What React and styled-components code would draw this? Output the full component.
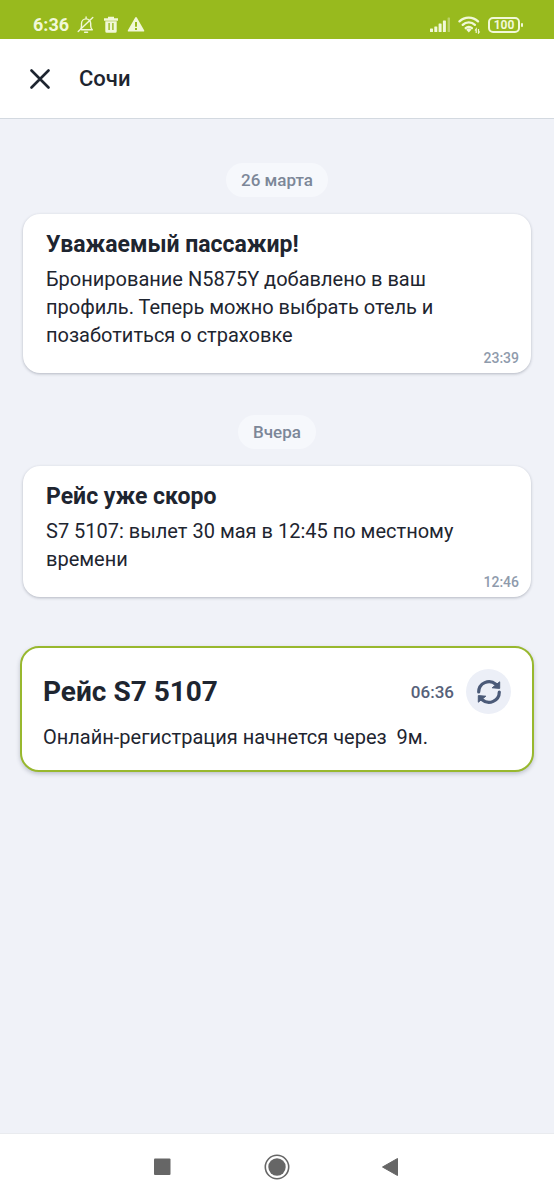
import styled, { createGlobalStyle } from "styled-components";

const messages = [
	{
		id: 1,
		date: "26 марта",
		title: "Уважаемый пассажир!",
		text: "Бронирование N5875Y добавлено в ваш профиль. Теперь можно выбрать отель и позаботиться о страховке",
		time: "23:39",
	},
	{
		id: 2,
		date: "Вчера",
		title: "Рейс уже скоро",
		text: "S7 5107: вылет 30 мая в 12:45 по местному времени",
		time: "12:46",
	},
];

const StatusBar = () => {
	return (
		<Status>
			<div className="group">
				<span className="clock">6:36</span>
				{/* muted bell */}
				<svg width="18" height="18" viewBox="0 0 18 18" fill="none">
					<path
						d="M3 13.8c1.200-1 1.500-2.200 1.500-4V7.500a4.600 4.600 0 0 1 9.200 0v2.300c0 1.800.4 3 1.600 4H4.500M7.600 16.200h3M9.100 1v1.800M1.200 15.600 15.800 1.600"
						stroke="currentColor"
						strokeWidth="1.400"
						strokeLinecap="round"
						strokeLinejoin="round"
					/>
				</svg>
				{/* trash can */}
				<svg width="16" height="18" viewBox="0 0 16 18">
					<path
						fill="currentColor"
						fillRule="evenodd"
						d="M5 .8h6v1.400h4v2.600H1V2.200h4zM2.300 5.300h11.400V15.200a1.500 1.500 0 0 1-1.500 1.500H3.800a1.500 1.500 0 0 1-1.500-1.500zM5.400 7v7h1.400V7zM9.200 7v7h1.400V7z"
					/>
				</svg>
				{/* warning */}
				<svg width="18" height="18" viewBox="0 0 18 18">
					<path
						fill="currentColor"
						fillRule="evenodd"
						d="M9 1a1 1 0 0 1 .8.4l7.300 12.900a.8.8 0 0 1-.7 1.300H1.600a.8.8 0 0 1-.7-1.300L8.200 1.400a1 1 0 0 1 .8-.4zM8 6v4.800h2V6zM8 12v2h2v-2z"
					/>
				</svg>
			</div>
			<div className="group right">
				<svg width="22" height="18" viewBox="0 0 22 18" fill="currentColor">
					<rect x="1" y="12.500" width="3" height="3.500" rx=".6" />
					<rect x="5.300" y="10.500" width="3" height="5.500" rx=".6" />
					<rect x="9.600" y="7.500" width="3" height="8.500" rx=".6" />
					<rect x="13.900" y="4.500" width="3" height="11.500" rx=".6" />
					<rect x="18.600" y="1.500" width="2.400" height="14.500" rx=".6" opacity=".4" />
				</svg>
				<svg width="23" height="18" viewBox="0 0 23 18" fill="none">
					<g stroke="currentColor" strokeWidth="2.300" strokeLinecap="round">
						<path d="M1.500 5.400a13 13 0 0 1 18.500 0" />
						<path d="M4.700 8.900a8.600 8.600 0 0 1 12.200 0" />
						<path d="M7.700 12.200a4.500 4.500 0 0 1 6.200 0" />
					</g>
					<path d="m8.200 13.700 2.600 2.800 2.600-2.800a3.600 3.600 0 0 0-5.200 0z" fill="currentColor" />
					<path
						d="M18.200 17v-4l-1.200 1.500M20.500 13v4l1.200-1.500"
						stroke="currentColor"
						strokeWidth="1.200"
					/>
				</svg>
				<Battery>
					<span>100</span>
				</Battery>
			</div>
		</Status>
	);
};

const Message = ({ title, text, time }) => {
	return (
		<Card>
			<h2>{title}</h2>
			<p>{text}</p>
			<time>{time}</time>
		</Card>
	);
};

const Flight = () => {
	return (
		<FlightCard>
			<div className="top">
				<h2>Рейс S7 5107</h2>
				<time>06:36</time>
				<RefreshButton type="button" aria-label="Обновить">
					<svg width="26" height="26" viewBox="0 0 26 26" fill="none">
						<g stroke="currentColor" strokeWidth="3.200" strokeLinecap="round">
							<path d="M2.700 13A10.300 10.300 0 0 1 19.800 5.300" />
							<path d="M23.300 13A10.300 10.300 0 0 1 6.200 20.700" />
						</g>
						<path
							d="M23.700 2.800v6.600l-7.500-.6zM2.300 23.200v-6.600l7.500.6z"
							fill="currentColor"
							stroke="currentColor"
							strokeLinejoin="round"
						/>
					</svg>
				</RefreshButton>
			</div>
			<p>Онлайн-регистрация начнется через&nbsp; 9м.</p>
		</FlightCard>
	);
};

const App = () => {
	return (
		<Page>
			<GlobalStyle />
			<StatusBar />
			<Header>
				<button type="button" aria-label="Закрыть">
					<svg width="20" height="20" viewBox="0 0 20 20" fill="none">
						<path
							d="M1.500 1.500l17 17M18.500 1.500l-17 17"
							stroke="currentColor"
							strokeWidth="2.600"
							strokeLinecap="round"
						/>
					</svg>
				</button>
				<h1>Сочи</h1>
			</Header>

			<Feed>
				{messages.map(({ id, date, ...message }) => (
					<section key={id}>
						<DateLabel>{date}</DateLabel>
						<Message {...message} />
					</section>
				))}
				<Flight />
			</Feed>

			<NavBar>
				<button type="button" aria-label="Недавние">
					<svg width="26" height="26" viewBox="0 0 26 26">
						<rect x="4" y="4.500" width="16.500" height="16.500" rx="1" fill="currentColor" />
					</svg>
				</button>
				<button type="button" aria-label="Домой">
					<svg width="26" height="26" viewBox="0 0 26 26">
						<circle cx="13" cy="13" r="11.700" fill="none" stroke="currentColor" strokeWidth="1.600" />
						<circle cx="13" cy="13" r="8.700" fill="currentColor" />
					</svg>
				</button>
				<button type="button" aria-label="Назад">
					<svg width="26" height="26" viewBox="0 0 26 26">
						<path
							d="M19.500 4.500v17L4.500 13z"
							fill="currentColor"
							stroke="currentColor"
							strokeLinejoin="round"
						/>
					</svg>
				</button>
			</NavBar>
		</Page>
	);
};

export default App;

const GlobalStyle = createGlobalStyle`
	*,
	*::before,
	*::after {
		box-sizing: border-box;
		margin: 0;
		padding: 0;
	}
	body {
		font-family: Roboto, "Noto Sans", sans-serif;
		color: #1e2530;
		background-color: #f0f2f8;
	}
	button {
		display: grid;
		place-items: center;
		border: 0;
		background: none;
		color: inherit;
		cursor: pointer;
	}
	svg {
		display: block;
	}
`;

const Page = styled.div`
	min-height: 100vh;
	display: flex;
	flex-direction: column;
`;

const Status = styled.div`
	display: flex;
	justify-content: space-between;
	padding: 10px 34px 0 33px;
	height: 39px;
	background-color: #98ba1e;
	color: #f1f8d8;

	.group {
		display: flex;
		align-items: center;
		gap: 8px;
	}
	.right {
		gap: 7px;
	}
	.clock {
		font-size: 18px;
		font-weight: 700;
	}
`;

const Battery = styled.div`
	position: relative;
	display: grid;
	place-items: center;
	width: 32px;
	height: 16px;
	border: 2px solid currentColor;
	border-radius: 5px;
	font-size: 12px;
	line-height: 12px;
	font-weight: 700;

	&::after {
		content: "";
		position: absolute;
		right: -5px;
		top: 4px;
		width: 2px;
		height: 4px;
		border-radius: 1px;
		background-color: currentColor;
	}
`;

const Header = styled.header`
	display: flex;
	align-items: center;
	gap: 24px;
	height: 80px;
	padding-inline: 24px;
	background-color: #fff;
	border-bottom: 1px solid #d3d9e0;

	button {
		width: 31px;
		height: 32px;
	}
	h1 {
		font-size: 22px;
		font-weight: 500;
		line-height: 30px;
	}
`;

const Feed = styled.main`
	flex: 1;
	padding: 2px 20px 40px;

	section {
		padding-inline: 3px;
	}
`;

const DateLabel = styled.h3`
	width: fit-content;
	margin: 42px auto 17px;
	padding-inline: 15px;
	border-radius: 17px;
	background-color: #f6f8fc;
	color: #7c8798;
	font-size: 17px;
	font-weight: 500;
	line-height: 34px;
`;

const Card = styled.article`
	padding: 17px 12px 6px 23px;
	border-radius: 17px;
	background-color: #fff;
	box-shadow: 0 1px 3px rgba(40, 50, 70, 0.3);

	h2 {
		font-size: 23px;
		font-weight: 700;
		line-height: 28px;
	}
	p {
		padding: 6px 23px 1px 0;
		font-size: 20px;
		line-height: 28px;
	}
	time {
		display: block;
		text-align: right;
		color: #8f9bac;
		font-size: 14px;
		font-weight: 500;
		line-height: 17px;
	}
`;

const FlightCard = styled.article`
	margin-top: 49px;
	padding: 21px 21px 19px;
	border: 2px solid #98b82e;
	border-radius: 19px;
	background-color: #fff;
	box-shadow: 0 2px 4px rgba(40, 50, 70, 0.25);

	.top {
		display: flex;
		align-items: center;
		gap: 12px;
	}
	h2 {
		flex: 1;
		font-size: 28px;
		font-weight: 700;
		line-height: 34px;
	}
	time {
		color: #566179;
		font-size: 17px;
		font-weight: 500;
	}
	p {
		margin-top: 9px;
		font-size: 20px;
		line-height: 28px;
	}
`;

const RefreshButton = styled.button`
	width: 45px;
	height: 45px;
	border-radius: 50%;
	background-color: #eceff7;
	color: #4b5a78;
`;

const NavBar = styled.nav`
	display: flex;
	justify-content: center;
	gap: 74px;
	padding-block: 13px;
	background-color: #fff;
	border-top: 1px solid #e9ebef;
	color: #666;

	button {
		width: 40px;
		height: 40px;
	}
`;
